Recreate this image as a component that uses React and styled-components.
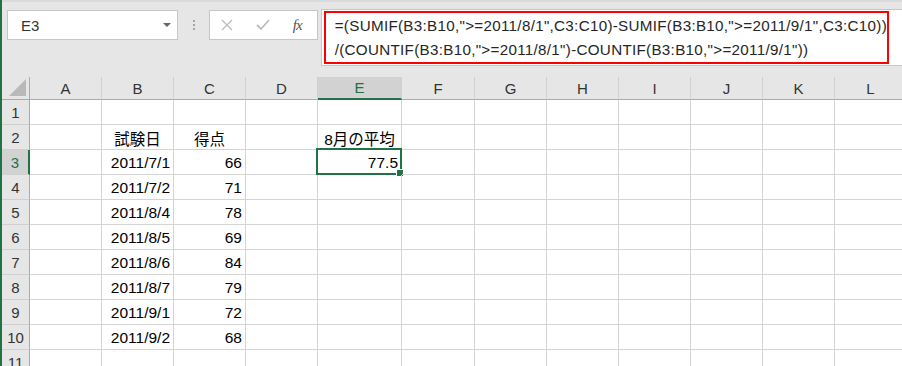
import React from "react";
import styled, { createGlobalStyle, css } from "styled-components";

const GREEN = "#217346";

const GlobalStyle = createGlobalStyle`
  html, body {
    margin: 0;
    padding: 0;
    background: #ffffff;
  }
  * {
    box-sizing: border-box;
  }
`;

const Window = styled.div`
  width: 902px;
  height: 366px;
  overflow: hidden;
  background: #e6e6e6;
  border-left: 2px solid ${GREEN};
  font-family: "Liberation Sans", "Noto Sans CJK JP", sans-serif;
  color: #000;
`;

const Toolbar = styled.div`
  height: 77px;
  display: flex;
  align-items: flex-start;
  padding: 10px 0 0 5px;
  border-top: 2px solid #dadada;
`;

const NameBox = styled.div`
  width: 173px;
  height: 30px;
  margin-top: -2px;
  background: #fff;
  border: 1px solid #c6c6c6;
  display: flex;
  align-items: center;
  justify-content: space-between;
  padding: 0 6px 0 13px;
  font-size: 15px;
  color: #333;
`;

const Caret = styled.span`
  width: 0;
  height: 0;
  border-left: 4px solid transparent;
  border-right: 4px solid transparent;
  border-top: 4px solid #666;
`;

const Grip = styled.div`
  width: 31px;
  height: 30px;
  margin-top: -2px;
  display: flex;
  flex-direction: column;
  align-items: center;
  justify-content: center;
  gap: 2px;
  span {
    width: 2px;
    height: 2px;
    background: #a6a6a6;
  }
`;

const FuncBox = styled.div`
  width: 110px;
  height: 30px;
  margin-top: -2px;
  background: #fff;
  border: 1px solid #c6c6c6;
  display: flex;
  align-items: center;
  padding: 0 0 0 11px;
  gap: 23px;
  svg {
    display: block;
  }
`;

const Fx = styled.span`
  font-family: "Liberation Serif", serif;
  font-style: italic;
  font-size: 15px;
  color: #555;
  letter-spacing: -1px;
`;

const FormulaBox = styled.div`
  flex: 1;
  height: 57px;
  margin: -3px 0 0 3px;
  background: #fff;
  border: 1px solid #c6c6c6;
  border-right: none;
  padding: 1px 13px 0 2px;
`;

const RedFrame = styled.div`
  height: 53px;
  border: 2px solid #ff0000;
  padding: 1px 0 0 9px;
  font-size: 15.2px;
  letter-spacing: 0.3px;
  line-height: 24px;
  color: #262626;
  white-space: nowrap;
`;

const Sheet = styled.div`
  display: grid;
  grid-template-columns: 28px 72px 72px 72px 72px 84px 73px 72px 72px 72px 72px 72px 72px;
  grid-auto-rows: 25px;
  grid-template-rows: 23px;
  background: #fff;
`;

const ColHead = styled.div`
  background: #e6e6e6;
  border-right: 1px solid #d0d0d0;
  border-bottom: 1px solid #ababab;
  display: flex;
  align-items: center;
  justify-content: center;
  font-size: 15px;
  color: #333;
  ${(p) =>
    p.$active &&
    css`
      background: #d2d2d2;
      color: ${GREEN};
      border-bottom: 2px solid ${GREEN};
    `}
`;

const Corner = styled(ColHead)`
  position: relative;
  border-right: 1px solid #ababab;
  svg {
    position: absolute;
    right: 3px;
    bottom: 3px;
  }
`;

const RowHead = styled.div`
  background: #e6e6e6;
  border-right: 1px solid #ababab;
  border-bottom: 1px solid #d0d0d0;
  display: flex;
  align-items: center;
  justify-content: center;
  font-size: 15px;
  color: #333;
  ${(p) =>
    p.$active &&
    css`
      background: #d2d2d2;
      color: ${GREEN};
      border-right: 2px solid ${GREEN};
    `}
`;

const Cell = styled.div`
  position: relative;
  border-right: 1px solid #d4d4d4;
  border-bottom: 1px solid #d4d4d4;
  display: flex;
  align-items: center;
  justify-content: ${(p) =>
    p.$align === "center" ? "center" : p.$align === "right" ? "flex-end" : "flex-start"};
  padding: 1px 3px 0 3px;
  font-size: 15.5px;
  white-space: nowrap;
`;

const Selection = styled.div`
  position: absolute;
  left: -2px;
  top: -2px;
  right: -1px;
  bottom: -1px;
  border: 2px solid ${GREEN};
  pointer-events: none;
  &::after {
    content: "";
    position: absolute;
    right: -4px;
    bottom: -4px;
    width: 6px;
    height: 6px;
    background: ${GREEN};
    border: 1px solid #fff;
  }
`;

const Label = styled.span`
  position: relative;
  z-index: 1;
`;

const columns = ["A", "B", "C", "D", "E", "F", "G", "H", "I", "J", "K", "L"];

const data = [
  ["2011/7/1", "66"],
  ["2011/7/2", "71"],
  ["2011/8/4", "78"],
  ["2011/8/5", "69"],
  ["2011/8/6", "84"],
  ["2011/8/7", "79"],
  ["2011/9/1", "72"],
  ["2011/9/2", "68"],
];

function cellContent(row, col) {
  if (row === 2) {
    if (col === "B") return { text: "試験日", align: "center" };
    if (col === "C") return { text: "得点", align: "center" };
    if (col === "E") return { text: "8月の平均", align: "center" };
  }
  if (row >= 3 && row <= 10) {
    const [date, score] = data[row - 3];
    if (col === "B") return { text: date, align: "right" };
    if (col === "C") return { text: score, align: "right" };
  }
  if (row === 3 && col === "E") return { text: "77.5", align: "right" };
  return null;
}

function CrossIcon() {
  return (
    <svg width="12" height="12" viewBox="0 0 12 12">
      <path d="M1 1 L11 11 M11 1 L1 11" stroke="#bdbdbd" strokeWidth="1.4" fill="none" />
    </svg>
  );
}

function CheckIcon() {
  return (
    <svg width="14" height="12" viewBox="0 0 14 12">
      <path d="M1 6 L5 10 L13 1" stroke="#bdbdbd" strokeWidth="1.8" fill="none" />
    </svg>
  );
}

export default function App() {
  const rows = Array.from({ length: 11 }, (_, i) => i + 1);
  return (
    <>
      <GlobalStyle />
      <Window>
        <Toolbar>
          <NameBox>
            <span>E3</span>
            <Caret />
          </NameBox>
          <Grip>
            <span />
            <span />
            <span />
          </Grip>
          <FuncBox>
            <CrossIcon />
            <CheckIcon />
            <Fx>fx</Fx>
          </FuncBox>
          <FormulaBox>
            <RedFrame>
              <div>=(SUMIF(B3:B10,"&gt;=2011/8/1",C3:C10)-SUMIF(B3:B10,"&gt;=2011/9/1",C3:C10))</div>
              <div>/(COUNTIF(B3:B10,"&gt;=2011/8/1")-COUNTIF(B3:B10,"&gt;=2011/9/1"))</div>
            </RedFrame>
          </FormulaBox>
        </Toolbar>
        <Sheet>
          <Corner>
            <svg width="17" height="17" viewBox="0 0 17 17">
              <polygon points="17,0 17,17 0,17" fill="#b9b9b9" />
            </svg>
          </Corner>
          {columns.map((c) => (
            <ColHead key={c} $active={c === "E"}>
              {c}
            </ColHead>
          ))}
          {rows.map((r) => (
            <React.Fragment key={r}>
              <RowHead $active={r === 3}>{r}</RowHead>
              {columns.map((c) => {
                const content = cellContent(r, c);
                return (
                  <Cell key={c} $align={content?.align}>
                    {r === 3 && c === "E" && <Selection />}
                    {content && <Label>{content.text}</Label>}
                  </Cell>
                );
              })}
            </React.Fragment>
          ))}
        </Sheet>
      </Window>
    </>
  );
}
